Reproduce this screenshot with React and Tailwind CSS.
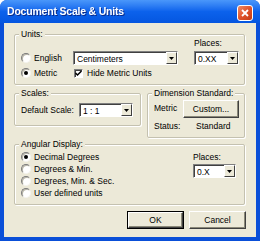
import React from "react";

const font = { fontFamily: '"Liberation Sans", Arial, sans-serif' };

const Radio = ({ checked, label }) => (
    <div className="flex items-center gap-[3px] h-[12px]">
        <span className="w-[10px] h-[10px] rounded-full bg-white border border-t-[#7a7a7a] border-l-[#7a7a7a] border-b-[#f4f3ee] border-r-[#f4f3ee] shadow-[inset_1px_1px_0_#b8b5a6] flex items-center justify-center shrink-0">
            {checked && <span className="w-[4px] h-[4px] rounded-full bg-black" />}
        </span>
        <span className="leading-[12px] whitespace-nowrap">{label}</span>
    </div>
);

const Combo = ({ value, width }) => (
    <div
        className={`flex h-[14px] bg-white border border-t-[#7f7f7f] border-l-[#7f7f7f] border-b-white border-r-white shadow-[inset_1px_1px_0_#404040] ${width}`}
    >
        <span className="flex-1 pl-[3px] pt-[1px] leading-[12px] whitespace-nowrap overflow-hidden">{value}</span>
        <span className="w-[11px] h-[12px] bg-[#ece9d8] border border-t-white border-l-white border-b-[#404040] border-r-[#404040] flex items-center justify-center">
            <svg width="5" height="3" viewBox="0 0 5 3">
                <path d="M0 0h5L2.5 3z" fill="#000" />
            </svg>
        </span>
    </div>
);

const Group = ({ title, className, children }) => (
    <div className={`border border-[#c4c1b0] rounded-[2px] shadow-[1px_1px_0_#fff,inset_1px_1px_0_#fff] ${className}`}>
        <div className="-mt-[7px] ml-[4px] px-[2px] w-fit h-[12px] leading-[12px] bg-[#ece9d8]">{title}</div>
        {children}
    </div>
);

const Button = ({ label, primary, width }) => (
    <div className={`${primary ? "border border-black" : ""} ${width} h-[18px]`}>
        <div className="w-full h-full bg-[#ece9d8] border border-t-white border-l-white border-b-[#404040] border-r-[#404040] shadow-[inset_-1px_-1px_0_#8a8878] flex items-center justify-center leading-[12px]">
            {label}
        </div>
    </div>
);

export default function App() {
    return (
        <div className="w-[260px] h-[241px] flex flex-col bg-[#0a4fd8] rounded-t-[7px] overflow-hidden text-[8.5px] text-black" style={font}>
            <div className="h-[23px] flex items-center justify-between pl-[7px] pr-[7px] bg-gradient-to-b from-[#4a97fa] via-[#0c62ec] to-[#0556e0]">
                <span className="text-white font-bold text-[10.5px] tracking-[-0.2px] drop-shadow-[1px_1px_0_#0a2c8c]">
                    Document Scale &amp; Units
                </span>
                <span className="w-[16px] h-[16px] mt-[2px] rounded-[3px] border border-white bg-gradient-to-br from-[#f08a62] via-[#e0532a] to-[#c23a13] flex items-center justify-center">
                    <svg width="8" height="8" viewBox="0 0 8 8">
                        <path d="M1 1l6 6M7 1L1 7" stroke="#fff" strokeWidth="1.8" />
                    </svg>
                </span>
            </div>
            <div className="flex-1 mx-[4px] mb-[4px] bg-[#ece9d8] flex flex-col pl-[10px] pt-[11px]">
                <Group title="Units:" className="w-[231px] h-[51px]">
                    <div className="flex flex-col pl-[6px]">
                        <div className="-mt-[2px] h-[10px] leading-[10px] ml-[173px]">Places:</div>
                        <div className="mt-[3px] flex items-center h-[14px]">
                            <div className="w-[52px]"><Radio label="English" /></div>
                            <Combo value="Centimeters" width="w-[105px]" />
                            <div className="ml-[16px]"><Combo value="0.XX" width="w-[45px]" /></div>
                        </div>
                        <div className="mt-[2px] flex items-center h-[12px]">
                            <div className="w-[53px]"><Radio checked label="Metric" /></div>
                            <span className="w-[9px] h-[9px] bg-white border border-t-[#7f7f7f] border-l-[#7f7f7f] border-b-white border-r-white shadow-[inset_1px_1px_0_#404040] flex items-center justify-center">
                                <svg width="7" height="7" viewBox="0 0 7 7">
                                    <path d="M0.5 3l2 2 4-4" stroke="#000" strokeWidth="1.5" fill="none" />
                                </svg>
                            </span>
                            <span className="ml-[4px] leading-[12px]">Hide Metric Units</span>
                        </div>
                    </div>
                </Group>

                <div className="mt-[8px] flex items-start gap-[6px]">
                    <Group title="Scales:" className="w-[127px] h-[33px]">
                        <div className="mt-[4px] h-[14px] pl-[6px] flex items-center">
                            <span className="w-[58px] whitespace-nowrap">Default Scale:</span>
                            <Combo value="1 : 1" width="w-[54px]" />
                        </div>
                    </Group>
                    <Group title="Dimension Standard:" className="w-[98px] h-[45px]">
                        <div className="mt-[1px] h-[17px] pl-[6px] flex items-center">
                            <span className="w-[29px]">Metric</span>
                            <Button label="Custom..." width="w-[56px]" />
                        </div>
                        <div className="mt-[3px] h-[12px] pl-[6px] flex items-center">
                            <span className="w-[42px]">Status:</span>
                            <span>Standard</span>
                        </div>
                    </Group>
                </div>

                <Group title="Angular Display:" className="mt-[6px] w-[231px] h-[61px]">
                    <div className="mt-[1px] pl-[6px] flex">
                        <div className="w-[172px] flex flex-col">
                            <Radio checked label="Decimal Degrees" />
                            <Radio label="Degrees & Min." />
                            <Radio label="Degrees, Min. & Sec." />
                            <Radio label="User defined units" />
                        </div>
                        <div className="flex flex-col">
                            <span className="h-[12px] leading-[12px]">Places:</span>
                            <div className="mt-[1px]"><Combo value="0.X" width="w-[43px]" /></div>
                        </div>
                    </div>
                </Group>

                <div className="mt-[6px] flex justify-end gap-[5px] pr-[10px]">
                    <Button primary label="OK" width="w-[57px]" />
                    <Button label="Cancel" width="w-[57px]" />
                </div>
            </div>
        </div>
    );
}
